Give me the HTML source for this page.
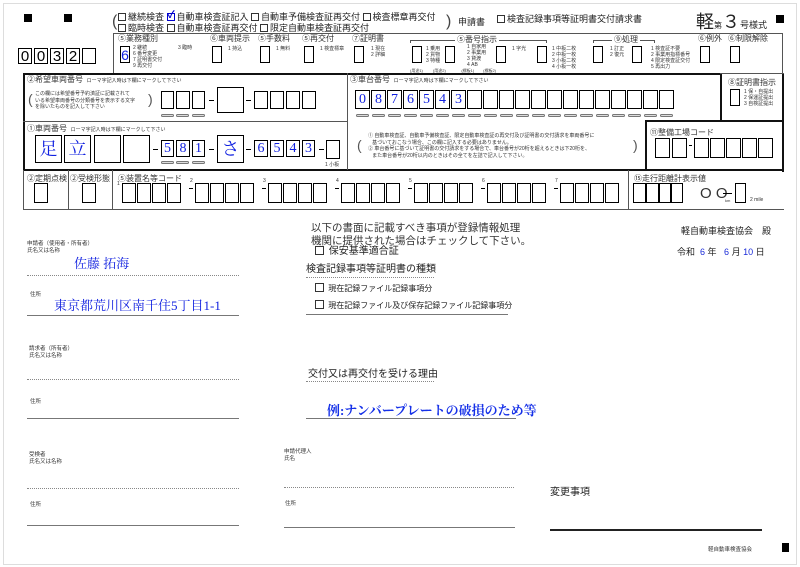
<!DOCTYPE html>
<html><head><meta charset="utf-8"><style>
*{margin:0;padding:0;box-sizing:border-box}
body{width:800px;height:567px;background:#fff;position:relative;overflow:hidden;font-family:"Liberation Sans","Noto Sans CJK JP",sans-serif;color:#222}
div,span{position:absolute}
.b{border:1px solid #000;background:#fff}
.t{font-size:6px;line-height:7px;white-space:nowrap;color:#333}
.h{font-size:8px;line-height:9px;white-space:nowrap;color:#333}
.m{font-size:10px;line-height:12px;white-space:nowrap;color:#222}
.d{color:#1020e0;font-family:"Liberation Serif","Noto Serif CJK SC",serif;text-align:center;font-size:14px;line-height:16px}
.p{width:13px;height:3px;border:1px solid #777;border-radius:2px;background:#ddd}
.cb{display:inline-block;position:relative;width:8px;height:8px;border:1px solid #333;vertical-align:-1px;margin-right:2px}
.ln{height:0;border-top:1.5px solid #777}
.dl{height:0;border-top:1px dotted #888}
.dash{width:5px;height:0;border-top:1px solid #000}
</style></head><body>
<div style="left:3px;top:3px;width:794px;height:562px;border:1px solid #ddd"></div>
<div style="left:24px;top:14px;width:8px;height:8px;background:#000"></div>
<div style="left:64px;top:14px;width:8px;height:8px;background:#000"></div>
<div style="left:776px;top:15px;width:8px;height:8px;background:#000"></div>
<div style="left:782px;top:543px;width:7px;height:9px;background:#000"></div>

<!-- top header -->
<div class="m" style="left:112px;top:11px;font-size:16px;line-height:22px;color:#444">(</div>
<div class="m" style="left:118px;top:12px;font-size:9px;line-height:11px">
<span class="cb" style="position:relative"></span>継続検査 <span class="cb" style="position:relative;border-color:#00c"><b style="position:absolute;left:0;top:-4px;color:#00c;font-size:10px">✓</b></span>自動車検査証記入 <span class="cb" style="position:relative"></span>自動車予備検査証再交付 <span class="cb" style="position:relative"></span>検査標章再交付</div>
<div class="m" style="left:118px;top:23px;font-size:9px;line-height:11px">
<span class="cb" style="position:relative"></span>臨時検査 <span class="cb" style="position:relative"></span>自動車検査証再交付 <span class="cb" style="position:relative"></span>限定自動車検査証再交付</div>
<div class="m" style="left:446px;top:11px;font-size:16px;line-height:22px;color:#444">)</div>
<div class="m" style="left:458px;top:16px;font-size:9px">申請書</div>
<div class="m" style="left:497px;top:13px;font-size:9px"><span class="cb" style="position:relative"></span>検査記録事項等証明書交付請求書</div>
<div class="m" style="left:696px;top:11px;font-size:18px;line-height:22px">軽<span style="position:static;font-size:8px">第</span>３<span style="position:static;font-size:9px">号様式</span></div>

<!-- 0032 -->
<div class="b d" style="left:18px;top:48px;width:14px;height:16px;font-family:'Liberation Sans',sans-serif;color:#000;font-size:15px">0</div>
<div class="b d" style="left:34px;top:48px;width:14px;height:16px;font-family:'Liberation Sans',sans-serif;color:#000;font-size:15px">0</div>
<div class="b d" style="left:50px;top:48px;width:14px;height:16px;font-family:'Liberation Sans',sans-serif;color:#000;font-size:15px">3</div>
<div class="b d" style="left:66px;top:48px;width:14px;height:16px;font-family:'Liberation Sans',sans-serif;color:#000;font-size:15px">2</div>
<div class="b" style="left:82px;top:48px;width:14px;height:16px"></div>

<!-- top section frame -->
<div style="left:113px;top:33px;width:670px;height:41px;border-left:1px solid #555;border-top:1px solid #555;border-right:1px solid #555"></div>
<div class="h" style="left:118px;top:34px">⑤業務種別</div>
<div class="b d" style="left:120px;top:46px;width:10px;height:17px;font-family:'Liberation Sans',sans-serif;font-size:14px">6</div>
<div class="t" style="left:133px;top:45px;font-size:5px;line-height:6px">2 継続<br>6 番号変更<br>7 証明書交付<br>9 再交付</div>
<div class="t" style="left:178px;top:45px;font-size:5px">3 臨時</div>
<div class="h" style="left:210px;top:34px">⑥車両提示</div>
<div class="b" style="left:212px;top:46px;width:10px;height:17px"></div>
<div class="t" style="left:228px;top:46px;font-size:5px">1 持込</div>
<div class="h" style="left:258px;top:34px">⑤手数料</div>
<div class="b" style="left:260px;top:46px;width:10px;height:17px"></div>
<div class="t" style="left:276px;top:46px;font-size:5px">1 無料</div>
<div class="h" style="left:302px;top:34px">⑤再交付</div>
<div class="b" style="left:304px;top:46px;width:10px;height:17px"></div>
<div class="t" style="left:320px;top:46px;font-size:5px">1 検査標章</div>
<div class="h" style="left:352px;top:34px">⑦証明書</div>
<div class="b" style="left:354px;top:46px;width:10px;height:17px"></div>
<div class="t" style="left:371px;top:46px;font-size:5px;line-height:6px">1 現在<br>2 詳細</div>
<div style="left:410px;top:40px;width:137px;height:3px;border:1px solid #555;border-bottom:none"></div>
<div class="h" style="left:455px;top:35px;background:#fff;padding:0 2px">⑤番号指示</div>
<div class="b" style="left:412px;top:46px;width:10px;height:17px"></div>
<div class="t" style="left:426px;top:46px;font-size:5px;line-height:6px">1 乗用<br>2 貨物<br>3 特種</div>
<div class="b" style="left:445px;top:46px;width:10px;height:17px"></div>
<div class="t" style="left:467px;top:44px;font-size:5px;line-height:6px">1 自家用<br>2 事業用<br>3 貸渡<br>4 AB</div>
<div class="b" style="left:496px;top:46px;width:10px;height:17px"></div>
<div class="t" style="left:512px;top:46px;font-size:5px">1 字光</div>
<div class="b" style="left:537px;top:46px;width:10px;height:17px"></div>
<div class="t" style="left:552px;top:46px;font-size:5px;line-height:6px">1 中板二枚<br>2 中板一枚<br>3 小板二枚<br>4 小板一枚</div>
<div class="t" style="left:410px;top:67px;font-size:4px">(用途1)&nbsp;&nbsp;&nbsp;&nbsp;&nbsp;&nbsp;&nbsp;&nbsp;&nbsp;(用途2)&nbsp;&nbsp;&nbsp;&nbsp;&nbsp;&nbsp;&nbsp;&nbsp;&nbsp;&nbsp;&nbsp;&nbsp;&nbsp;&nbsp;(標板1)&nbsp;&nbsp;&nbsp;&nbsp;&nbsp;&nbsp;&nbsp;&nbsp;(標板2)</div>
<div style="left:593px;top:40px;width:62px;height:3px;border:1px solid #555;border-bottom:none"></div>
<div class="h" style="left:612px;top:35px;background:#fff;padding:0 2px">⑨処理</div>
<div class="b" style="left:593px;top:46px;width:10px;height:17px"></div>
<div class="t" style="left:610px;top:46px;font-size:5px;line-height:6px">1 訂正<br>2 復元</div>
<div class="b" style="left:632px;top:46px;width:10px;height:17px"></div>
<div class="t" style="left:651px;top:46px;font-size:5px;line-height:6px">1 検査証不要<br>2 事業用指標番号<br>4 限定検査証交付<br>5 再出力</div>
<div class="h" style="left:698px;top:34px">⑥例外</div>
<div class="b" style="left:700px;top:46px;width:10px;height:17px"></div>
<div class="h" style="left:728px;top:34px">⑥制限解除</div>
<div class="b" style="left:730px;top:46px;width:10px;height:17px"></div>

<!-- main thick frame -->
<div style="left:23px;top:73px;width:698px;height:98px;border:2px solid #111;border-right:none;border-bottom:none"></div>
<div style="left:720px;top:73px;width:2px;height:49px;background:#111"></div>
<div style="left:645px;top:120px;width:139px;height:2px;background:#111"></div>
<div style="left:645px;top:120px;width:2px;height:50px;background:#111"></div>
<div style="left:782px;top:73px;width:2px;height:99px;background:#111"></div>
<div style="left:720px;top:73px;width:64px;height:1px;background:#555"></div>
<div style="left:23px;top:169px;width:761px;height:2px;background:#111"></div>
<div style="left:347px;top:73px;width:1px;height:97px;background:#555"></div>
<div style="left:23px;top:121px;width:325px;height:1px;background:#555"></div>

<!-- 希望車両番号 -->
<div class="h" style="left:27px;top:75px">②希望車両番号 <span class="t" style="position:static;font-size:5px">&nbsp;ローマ字記入時は下欄にマークして下さい</span></div>
<div class="t" style="left:28px;top:87px;font-size:14px;line-height:24px;color:#555">(</div>
<div class="t" style="left:35px;top:91px;font-size:5px;line-height:6.5px">この欄には希望番号予約済証に記載されて<br>いる希望車両番号の分類番号を表示する文字<br>を除いたものを記入して下さい</div>
<div class="t" style="left:148px;top:87px;font-size:14px;line-height:24px;color:#555">)</div>
<div class="b" style="left:161px;top:91px;width:13px;height:18px"></div>
<div class="b" style="left:176px;top:91px;width:14px;height:18px"></div>
<div class="b" style="left:192px;top:91px;width:13px;height:18px"></div>
<div class="dash" style="left:209px;top:100px"></div>
<div class="b" style="left:217px;top:87px;width:27px;height:26px"></div>
<div class="dash" style="left:246px;top:100px"></div>
<div class="b" style="left:254px;top:91px;width:14px;height:18px"></div>
<div class="b" style="left:270px;top:91px;width:14px;height:18px"></div>
<div class="b" style="left:286px;top:91px;width:14px;height:18px"></div>
<div class="b" style="left:302px;top:91px;width:14px;height:18px"></div>
<div class="p" style="left:161px;top:114px"></div><div class="p" style="left:176px;top:114px"></div><div class="p" style="left:192px;top:114px"></div>

<!-- 車台番号 -->
<div class="h" style="left:350px;top:75px">③車台番号 <span class="t" style="position:static;font-size:5px">&nbsp;ローマ字記入時は下欄にマークして下さい</span></div>
<div id="vin"></div>

<!-- 車両番号 -->
<div class="h" style="left:27px;top:124px">①車両番号 <span class="t" style="position:static;font-size:5px">&nbsp;ローマ字記入時は下欄にマークして下さい</span></div>
<div class="b d" style="left:35px;top:135px;width:27px;height:28px;font-size:18px;line-height:26px">足</div>
<div class="b d" style="left:64px;top:135px;width:27px;height:28px;font-size:18px;line-height:26px">立</div>
<div class="b" style="left:94px;top:135px;width:27px;height:28px"></div>
<div class="b" style="left:123px;top:135px;width:27px;height:28px"></div>
<div class="dash" style="left:153px;top:149px"></div>
<div class="b d" style="left:161px;top:140px;width:13px;height:17px">5</div>
<div class="b d" style="left:176px;top:140px;width:14px;height:17px">8</div>
<div class="b d" style="left:192px;top:140px;width:13px;height:17px">1</div>
<div class="dash" style="left:209px;top:149px"></div>
<div class="b d" style="left:217px;top:135px;width:27px;height:28px;font-size:18px;line-height:26px">さ</div>
<div class="dash" style="left:246px;top:149px"></div>
<div class="b d" style="left:254px;top:140px;width:14px;height:17px">6</div>
<div class="b d" style="left:270px;top:140px;width:14px;height:17px">5</div>
<div class="b d" style="left:286px;top:140px;width:14px;height:17px">4</div>
<div class="b d" style="left:302px;top:140px;width:13px;height:17px">3</div>
<div class="dash" style="left:319px;top:149px"></div>
<div class="b" style="left:326px;top:140px;width:14px;height:19px"></div>
<div class="t" style="left:325px;top:162px;font-size:5px">1 小板</div>
<div class="p" style="left:161px;top:161px"></div><div class="p" style="left:176px;top:161px"></div><div class="p" style="left:192px;top:161px"></div>

<div class="t" style="left:357px;top:130px;font-size:14px;line-height:30px;color:#555">(</div>
<div class="t" style="left:368px;top:133px;font-size:5px;line-height:6.5px">① 自動車検査証、自動車予備検査証、限定自動車検査証の再交付及び証明書の交付請求を車両番号に<br>&nbsp;&nbsp;&nbsp;基づいておこなう場合、この欄に記入する必要はありません。<br>② 車台番号に基づいて証明書の交付請求をする場合で、車台番号が20桁を超えるときは下20桁を、<br>&nbsp;&nbsp;&nbsp;また車台番号が20桁以内のときはその全てを左詰で記入して下さい。</div>
<div class="t" style="left:633px;top:130px;font-size:14px;line-height:30px;color:#555">)</div>

<div class="h" style="left:650px;top:128px">⑪整備工場コード</div>
<div class="b" style="left:655px;top:138px;width:15px;height:20px"></div>
<div class="b" style="left:672px;top:138px;width:15px;height:20px"></div>
<div style="left:689px;top:145px;width:3px;border-top:1px solid #000"></div>
<div class="b" style="left:694px;top:138px;width:15px;height:20px"></div>
<div class="b" style="left:710px;top:138px;width:15px;height:20px"></div>
<div class="b" style="left:726px;top:138px;width:15px;height:20px"></div>
<div class="b" style="left:742px;top:138px;width:15px;height:20px"></div>
<div class="b" style="left:758px;top:138px;width:15px;height:20px"></div>

<div class="h" style="left:728px;top:78px">⑧証明書指示</div>
<div class="b" style="left:730px;top:89px;width:10px;height:17px"></div>
<div class="t" style="left:744px;top:89px;font-size:5px;line-height:6px">1 保・自提出<br>2 保運証提出<br>3 自検証提出</div>

<!-- bottom row -->
<div style="left:23px;top:170px;width:1px;height:40px;background:#555"></div>
<div style="left:23px;top:209px;width:761px;height:1px;background:#555"></div>
<div style="left:68px;top:170px;width:1px;height:40px;background:#555"></div>
<div style="left:112px;top:170px;width:1px;height:40px;background:#555"></div>
<div style="left:628px;top:170px;width:1px;height:40px;background:#555"></div>
<div class="h" style="left:27px;top:174px">②定期点検</div>
<div class="b" style="left:34px;top:183px;width:14px;height:20px"></div>
<div class="h" style="left:70px;top:174px">②受検形態</div>
<div class="b" style="left:82px;top:183px;width:14px;height:20px"></div>
<div class="h" style="left:118px;top:174px">⑤装置名等コード</div>
<div id="codes"></div>
<div class="h" style="left:634px;top:174px">⑮走行距離計表示値</div>
<div class="b" style="left:633px;top:183px;width:13px;height:20px"></div>
<div class="b" style="left:646px;top:183px;width:13px;height:20px"></div>
<div class="b" style="left:659px;top:183px;width:12px;height:20px"></div>
<div class="b" style="left:671px;top:183px;width:12px;height:20px"></div>
<div class="m" style="left:700px;top:186px;font-size:15px;line-height:16px;color:#333">O O</div>
<div style="left:723px;top:193px;width:9px;border-top:1px solid #000"></div>
<div class="t" style="left:725px;top:197px;font-size:4px">km</div>
<div class="b" style="left:735px;top:183px;width:11px;height:20px"></div>
<div class="t" style="left:750px;top:197px;font-size:5px">2 mile</div>

<!-- lower section -->
<div class="m" style="left:311px;top:222px;font-size:10.5px;line-height:13px;color:#333">以下の書面に記載すべき事項が登録情報処理<br>機関に提供された場合はチェックして下さい。</div>
<div class="m" style="left:315px;top:246px"><span class="cb" style="position:relative;width:9px;height:9px"></span> 保安基準適合証</div>
<div class="m" style="left:306px;top:264px">検査記録事項等証明書の種類</div>
<div class="dl" style="left:306px;top:277px;width:128px"></div>
<div class="m" style="left:315px;top:283px;font-size:8px"><span class="cb" style="position:relative;width:9px;height:9px"></span> 現在記録ファイル記録事項分</div>
<div class="m" style="left:315px;top:300px;font-size:8px"><span class="cb" style="position:relative;width:9px;height:9px"></span> 現在記録ファイル及び保存記録ファイル記録事項分</div>
<div class="ln" style="left:306px;top:314px;width:202px"></div>

<div class="m" style="left:681px;top:225px;font-size:9px">軽自動車検査協会　殿</div>
<div class="m" style="left:677px;top:246px;font-size:9px">令和 &nbsp;<span style="position:static;color:#1a2bd8">6</span> 年 &nbsp;&nbsp;<span style="position:static;color:#1a2bd8">6</span> 月 <span style="position:static;color:#1a2bd8">10</span> 日</div>

<div class="t" style="left:27px;top:241px;font-size:5.5px">申請者（使用者・所有者）<br>氏名又は名称</div>
<div class="d" style="left:74px;top:256px;font-size:13px;text-align:left;white-space:nowrap">佐藤 拓海</div>
<div class="dl" style="left:27px;top:275px;width:212px"></div>
<div class="t" style="left:30px;top:292px;font-size:5.5px">住所</div>
<div class="d" style="left:54px;top:298px;font-size:13px;text-align:left;white-space:nowrap">東京都荒川区南千住5丁目1-1</div>
<div class="ln" style="left:27px;top:315px;width:212px"></div>

<div class="t" style="left:29px;top:346px;font-size:5.5px">請求者（所有者）<br>氏名又は名称</div>
<div class="dl" style="left:27px;top:379px;width:212px"></div>
<div class="t" style="left:30px;top:399px;font-size:5.5px">住所</div>
<div class="ln" style="left:27px;top:418px;width:212px"></div>

<div class="m" style="left:308px;top:369px">交付又は再交付を受ける理由</div>
<div class="dl" style="left:306px;top:381px;width:128px"></div>
<div class="d" style="left:327px;top:403px;font-size:13px;font-weight:bold;text-align:left;white-space:nowrap;color:#1530e8">例:ナンバープレートの破損のため等</div>
<div class="ln" style="left:306px;top:418px;width:210px"></div>

<div class="t" style="left:29px;top:452px;font-size:5.5px">受検者<br>氏名又は名称</div>
<div class="dl" style="left:27px;top:488px;width:212px"></div>
<div class="t" style="left:30px;top:502px;font-size:5.5px">住所</div>
<div class="ln" style="left:27px;top:525px;width:212px"></div>

<div class="t" style="left:284px;top:449px;font-size:5.5px">申請代理人<br>氏名</div>
<div class="dl" style="left:284px;top:487px;width:230px"></div>
<div class="t" style="left:285px;top:501px;font-size:5.5px">住所</div>
<div class="ln" style="left:284px;top:527px;width:231px"></div>

<div class="m" style="left:550px;top:487px">変更事項</div>
<div style="left:550px;top:529px;width:212px;height:2px;background:#222"></div>
<div class="t" style="left:708px;top:547px;font-size:5.5px">軽自動車検査協会</div>

<script>
var h='';
var vin='0876543';
for(var i=0;i<20;i++){var x=355+i*16;h+='<div class="b d" style="left:'+x+'px;top:90px;width:15px;height:19px;line-height:17px">'+(vin[i]||'')+'</div><div class="p" style="left:'+(x+1)+'px;top:114px"></div>';}
document.getElementById('vin').outerHTML=h;
h='';
for(var g=0;g<7;g++){var gx=122+g*73;h+='<div class="t" style="left:'+(gx-5)+'px;top:'+(g?178:181)+'px;font-size:5px">'+(g+1)+'</div>';if(g)h+='<div style="left:'+(gx-6)+'px;top:188px;width:4px;border-top:1px solid #000"></div>';for(var k=0;k<4;k++)h+='<div class="b" style="left:'+(gx+k*15)+'px;top:183px;width:14px;height:20px"></div>';}
document.getElementById('codes').outerHTML=h;
</script>
</body></html>
